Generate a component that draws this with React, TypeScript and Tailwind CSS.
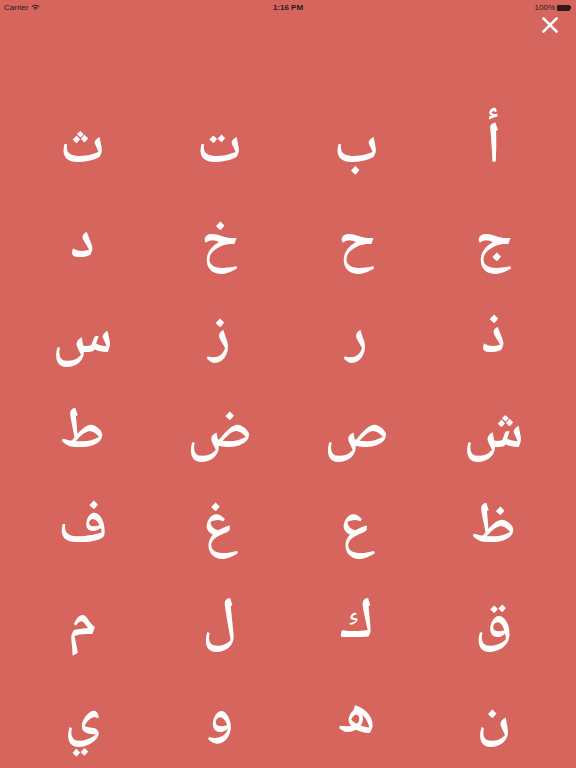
import React from "react";

const letters = [
  "أ", "ب", "ت", "ث",
  "ج", "ح", "خ", "د",
  "ذ", "ر", "ز", "س",
  "ش", "ص", "ض", "ط",
  "ظ", "ع", "غ", "ف",
  "ق", "ك", "ل", "م",
  "ن", "ه", "و", "ي",
];

export default function App() {
  return (
    <div className="w-[576px] h-[768px] bg-[#d6655e] overflow-hidden flex flex-col" style={{ fontFamily: '"Liberation Sans", sans-serif' }}>
      <div className="h-[15px] px-[4px] flex items-center justify-between text-[8px] text-[#2a1a1a] relative">
        <div className="flex items-center gap-[3px]">
          <span>Carrier</span>
          <svg width="9" height="7" viewBox="0 0 9 7">
            <path d="M0.5 2.2 A6 6 0 0 1 8.5 2.2 L7.6 3.1 A4.7 4.7 0 0 0 1.4 3.1 Z" fill="#2a1a1a" />
            <path d="M2.2 3.9 A3.5 3.5 0 0 1 6.8 3.9 L5.9 4.8 A2.2 2.2 0 0 0 3.1 4.8 Z" fill="#2a1a1a" />
            <path d="M3.8 5.6 A1 1 0 0 1 5.2 5.6 L4.5 6.4 Z" fill="#2a1a1a" />
          </svg>
        </div>
        <span className="absolute left-1/2 -translate-x-1/2 font-semibold">1:16 PM</span>
        <div className="flex items-center gap-[2px] pr-[1px]">
          <span>100%</span>
          <div className="flex items-center">
            <div className="w-[13px] h-[6px] bg-[#2a1a1a] rounded-[1px]" />
            <div className="w-[1px] h-[3px] bg-[#2a1a1a]" />
          </div>
        </div>
      </div>
      <div className="flex justify-end pr-[18px] pt-[2px]">
        <svg width="16" height="16" viewBox="0 0 16 16">
          <path d="M1.5 1.5 L14.5 14.5 M14.5 1.5 L1.5 14.5" stroke="white" strokeWidth="2.5" strokeLinecap="square" />
        </svg>
      </div>
      <div dir="rtl" className="grid grid-cols-4 auto-rows-[95px] px-[14px] mt-[69px]" style={{ fontFamily: '"Noto Naskh Arabic", "Noto Sans Arabic", "DejaVu Sans", sans-serif' }}>
        {letters.map((l) => (
          <div key={l} className="flex items-center justify-center text-white text-[58px] leading-none font-semibold">
            {l}
          </div>
        ))}
      </div>
    </div>
  );
}
